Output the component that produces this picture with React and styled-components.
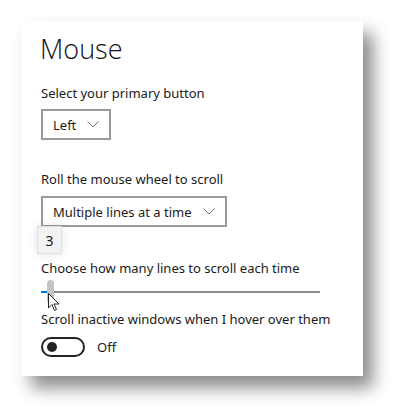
import React from 'react';
import styled, { createGlobalStyle } from 'styled-components';

const Global = createGlobalStyle`
    html, body {
        margin: 0;
        padding: 0;
        background: #fff;
    }
    body {
        font-family: 'Noto Sans', 'Open Sans', sans-serif;
        color: #1a1a1a;
    }
`;

const Page = styled.div`
    width: 405px;
    height: 418px;
    padding: 21px 0 0 21px;
    box-sizing: border-box;
`;

const Panel = styled.div`
    width: 342px;
    height: 355px;
    background: #fff;
    box-shadow: 10px 12px 16px rgba(0, 0, 0, 0.45);
    box-sizing: border-box;
    padding: 10px 0 0 20px;
    display: flex;
    flex-direction: column;
`;

const Title = styled.h1`
    margin: 0;
    font-family: 'Open Sans', sans-serif;
    font-weight: 300;
    font-size: 27px;
    line-height: 36px;
    color: #111;
    margin-left: -1px;
`;

const Label = styled.div`
    font-size: 13px;
    line-height: 18px;
    color: #1a1a1a;
    margin-top: ${({ top }) => top || 0}px;
`;

const Select = styled.div`
    margin-top: ${({ top }) => top || 0}px;
    height: 31px;
    box-sizing: border-box;
    border: 2px solid #9a9a9a;
    display: inline-flex;
    align-self: flex-start;
    align-items: center;
    gap: 11px;
    padding: 0 10px 0 10px;
    font-size: 13px;
    color: #1a1a1a;
`;

const Chevron = () => (
    <svg width="12" height="7" viewBox="0 0 12 7">
        <path d="M0.5 0.5 L6 6 L11.5 0.5" fill="none" stroke="#777" strokeWidth="1" />
    </svg>
);

const SliderBlock = styled.div`
    position: relative;
    margin-top: 32px;
    display: flex;
    flex-direction: column;
`;

const Tooltip = styled.div`
    position: absolute;
    left: -4px;
    top: -33px;
    width: 25px;
    height: 28px;
    box-sizing: border-box;
    background: #f2f2f2;
    border: 1px solid #e0e0e0;
    box-shadow: 0 0 10px rgba(0, 0, 0, 0.12);
    font-size: 14px;
    display: flex;
    align-items: center;
    justify-content: center;
`;

const Track = styled.div`
    position: relative;
    width: 279px;
    height: 24px;
    margin-top: 3px;
    display: flex;
    align-items: center;
`;

const Rail = styled.div`
    width: 100%;
    height: 2px;
    background: #8a8a8a;
    display: flex;
`;

const Fill = styled.div`
    height: 2px;
    background: #0078d7;
`;

const Thumb = styled.div`
    position: absolute;
    top: 0;
    width: 7px;
    height: 23px;
    border-radius: 4px;
    background: #c4c4c4;
`;

const Cursor = styled.svg`
    position: absolute;
    top: 13px;
    left: 7px;
`;

const ToggleRow = styled.div`
    margin-top: 9px;
    display: flex;
    align-items: center;
    gap: 12px;
    font-size: 13px;
`;

const Toggle = styled.div`
    width: 44px;
    height: 20px;
    box-sizing: border-box;
    border: 2px solid #222;
    border-radius: 10px;
    display: flex;
    align-items: center;
    padding-left: 4px;
`;

const Knob = styled.div`
    width: 10px;
    height: 10px;
    border-radius: 50%;
    background: #222;
`;

export default function App() {
    const value = 3;
    const pct = 6 / 279;
    return (
        <Page>
            <Global />
            <Panel>
                <Title>Mouse</Title>
                <Label top={17}>Select your primary button</Label>
                <Select top={7}>
                    Left <Chevron />
                </Select>
                <Label top={30}>Roll the mouse wheel to scroll</Label>
                <Select top={8}>
                    Multiple lines at a time <Chevron />
                </Select>
                <SliderBlock>
                    <Tooltip>{value}</Tooltip>
                    <Label>Choose how many lines to scroll each time</Label>
                    <Track>
                        <Rail>
                            <Fill style={{ width: `${pct * 100}%` }} />
                        </Rail>
                        <Thumb style={{ left: '6px' }} />
                        <Cursor width="12" height="19" viewBox="0 0 12 19">
                            <path d="M0.5 0.5 L0.5 15 L4 11.5 L6.5 17.5 L8.5 16.5 L6 11 L11 11 Z" fill="#fff" stroke="#222" strokeWidth="1" strokeLinejoin="round" />
                        </Cursor>
                    </Track>
                </SliderBlock>
                <Label top={6}>Scroll inactive windows when I hover over them</Label>
                <ToggleRow>
                    <Toggle>
                        <Knob />
                    </Toggle>
                    Off
                </ToggleRow>
            </Panel>
        </Page>
    );
}
